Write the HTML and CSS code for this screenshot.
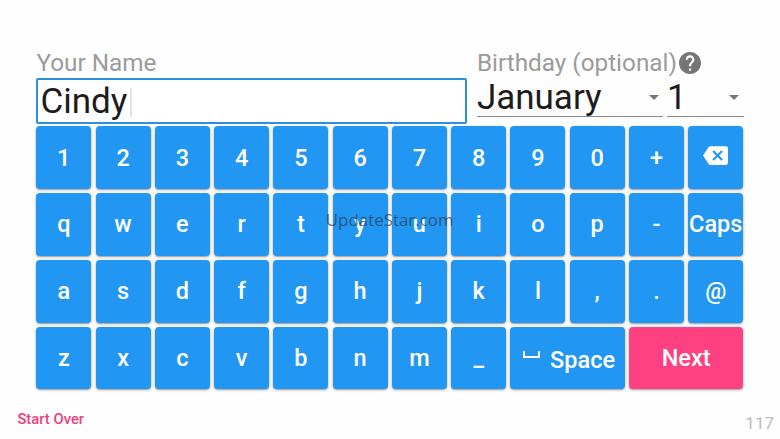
FILE: index.html
```
<!DOCTYPE html>
<html lang="en">
<head>
  <meta charset="UTF-8">
  <title>Your Name</title>
  <link rel="stylesheet" href="styles.css">
</head>
<body>

  <div class="screen">
    <!-- Name and birthday -->
    <div class="fields">
      <div class="name-field">
        <div class="label">Your Name</div>
        <div class="name-input"><span>Cindy</span><i class="cursor"></i></div>
      </div>
      <div class="birthday-field">
        <div class="label">Birthday (optional)<svg class="help" viewBox="2 2 20 20"><path d="M12 2C6.48 2 2 6.48 2 12s4.48 10 10 10 10-4.48 10-10S17.52 2 12 2zm1 17h-2v-2h2v2zm2.07-7.75l-.9.92C13.45 12.9 13 13.5 13 15h-2v-.5c0-1.1.45-2.1 1.17-2.83l1.24-1.26c.37-.36.59-.86.59-1.41 0-1.1-.9-2-2-2s-2 .9-2 2H8c0-2.21 1.79-4 4-4s4 1.79 4 4c0 .88-.36 1.68-.93 2.25z"/></svg></div>
        <div class="selects">
          <div class="select month"><span>January</span><i class="arrow"></i></div>
          <div class="select day"><span>1</span><i class="arrow"></i></div>
        </div>
      </div>
    </div>

    <!-- Keyboard -->
    <div class="keyboard">
      <div class="key">1</div>
      <div class="key">2</div>
      <div class="key">3</div>
      <div class="key">4</div>
      <div class="key">5</div>
      <div class="key">6</div>
      <div class="key">7</div>
      <div class="key">8</div>
      <div class="key">9</div>
      <div class="key">0</div>
      <div class="key">+</div>
      <div class="key"><svg class="backspace" viewBox="0 3 24 18"><path d="M22 3H7c-.69 0-1.23.35-1.59.88L0 12l5.41 8.11c.36.53.9.89 1.59.89h15c1.1 0 2-.9 2-2V5c0-1.1-.9-2-2-2zm-3 12.59L17.59 17 14 13.41 10.41 17 9 15.59 12.59 12 9 8.41 10.41 7 14 10.59 17.59 7 19 8.41 15.41 12 19 15.59z"/></svg></div>

      <div class="key">q</div>
      <div class="key">w</div>
      <div class="key">e</div>
      <div class="key">r</div>
      <div class="key">t</div>
      <div class="key">y</div>
      <div class="key">u</div>
      <div class="key">i</div>
      <div class="key">o</div>
      <div class="key">p</div>
      <div class="key">-</div>
      <div class="key">Caps</div>

      <div class="key">a</div>
      <div class="key">s</div>
      <div class="key">d</div>
      <div class="key">f</div>
      <div class="key">g</div>
      <div class="key">h</div>
      <div class="key">j</div>
      <div class="key">k</div>
      <div class="key">l</div>
      <div class="key">,</div>
      <div class="key">.</div>
      <div class="key">@</div>

      <div class="key">z</div>
      <div class="key">x</div>
      <div class="key">c</div>
      <div class="key">v</div>
      <div class="key">b</div>
      <div class="key">n</div>
      <div class="key">m</div>
      <div class="key">_</div>
      <div class="key wide space"><svg class="space-icon" viewBox="0 0 17 7"><path d="M1 0v6h15V0"/></svg>Space</div>
      <div class="key wide next">Next</div>

      <div class="watermark">UpdateStar.com</div>
    </div>

    <div class="footer">
      <div class="start-over">Start Over</div>
      <div class="counter">117</div>
    </div>
  </div>

</body>
</html>
```

FILE: styles.css
```
* { box-sizing: border-box; }
body { margin: 0; background: #fefefe; font-family: Roboto, sans-serif; color: #1c1c1c; }
.screen { width: 780px; height: 439px; padding-top: 48.4px; overflow: hidden; }

.fields { display: flex; gap: 10px; height: 78px; margin: 0 36px 0 36.4px; }
.name-field { width: 430.5px; }
.birthday-field { flex: 1; }
.label { display: flex; align-items: center; height: 29px; font-size: 24.3px; color: #9b9b9b; white-space: nowrap; }
.help { width: 22px; height: 22px; margin-left: 2px; fill: #757575; }
.name-input { display: flex; align-items: center; height: 46px; margin-top: 0.6px; padding: 1px 0 0 2px; border: 2px solid #2b90e0; border-radius: 2px; font-size: 35px; background: #fff; }
.cursor { width: 2px; height: 29px; margin: 2px 0 0 3px; background: #e2e2e2; }
.selects { display: flex; gap: 4px; }
.select { display: flex; align-items: center; justify-content: space-between; height: 40px; border-bottom: 1px solid #8c8c8c; font-size: 35px; line-height: 39px; }
.select span { padding-top: 1px; }
.month { width: 186px; padding-right: 4px; }
.day { width: 77px; padding-right: 5px; }
.arrow { margin-top: 1px; border: 5px solid transparent; border-top-color: #757575; border-bottom: 0; }

.keyboard { position: relative; display: grid; grid-template-columns: repeat(12, 55px); grid-auto-rows: 62.7px; gap: 4.05px 4.28px; margin-left: 36.3px; }
.key { display: flex; align-items: center; justify-content: center; border-radius: 4px; background: #2196f3; color: #fff; font-size: 23.5px; font-weight: 500; box-shadow: 0 1px 3px rgba(0,0,0,0.3), 0 1px 1px rgba(0,0,0,0.15); }
.wide { grid-column: span 2; }
.next { background: #ff4081; }
.space { padding: 5px 0 0 3px; }
.backspace { width: 25px; height: 19px; margin-top: -4px; fill: #fff; }
.space-icon { width: 17px; height: 7px; margin: -11px 10px 0 0; fill: none; stroke: #fff; stroke-width: 2; }
.watermark { position: absolute; left: 289.5px; top: 82px; font-family: "Open Sans", sans-serif; font-size: 16.9px; color: rgba(40,50,60,0.65); }

.footer { display: flex; justify-content: space-between; padding: 21px 6px 0 17.4px; }
.start-over { font-size: 14.8px; font-weight: 500; color: #ec407a; }
.counter { padding-top: 3px; font-size: 17px; color: #bdbdbd; }
```
